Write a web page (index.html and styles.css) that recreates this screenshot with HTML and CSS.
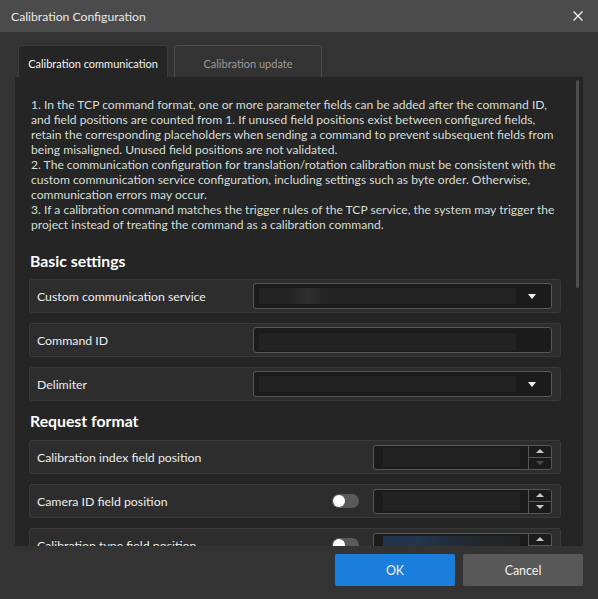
FILE: index.html
```html
<!DOCTYPE html>
<html>
<head>
    <title>Calibration Configuration</title>
    <link rel="stylesheet" href="styles.css">
</head>
<body>
    <div class="dialog">
        <div class="titlebar">
            <span class="title">Calibration Configuration</span>
            <button class="close">
                <svg width="10" height="10" viewBox="0 0 10 10"><path d="M0.5 0.5L9.5 9.5M9.5 0.5L0.5 9.5" stroke="#f0f0f0" stroke-width="1.4" fill="none"/></svg>
            </button>
        </div>

        <div class="main">
            <div class="tabs">
                <div class="tab active">Calibration communication</div>
                <div class="tab">Calibration update</div>
            </div>

            <div class="panel">
                <div class="panel-body">
                    <p class="notice">
                        1. In the TCP command format, one or more parameter fields can be added after the command ID,<br>
                        and field positions are counted from 1. If unused field positions exist between configured fields,<br>
                        retain the corresponding placeholders when sending a command to prevent subsequent fields from<br>
                        being misaligned. Unused field positions are not validated.<br>
                        2. The communication configuration for translation/rotation calibration must be consistent with the<br>
                        custom communication service configuration, including settings such as byte order. Otherwise,<br>
                        communication errors may occur.<br>
                        3. If a calibration command matches the trigger rules of the TCP service, the system may trigger the<br>
                        project instead of treating the command as a calibration command.
                    </p>

                    <h2 class="section first">Basic settings</h2>
                    <div class="rows">
                        <div class="row">
                            <span class="label">Custom communication service</span>
                            <div class="combo">
                                <span class="value glow"></span>
                                <span class="caret"></span>
                            </div>
                        </div>
                        <div class="row">
                            <span class="label">Command ID</span>
                            <div class="combo">
                                <span class="value tall"></span>
                            </div>
                        </div>
                        <div class="row">
                            <span class="label">Delimiter</span>
                            <div class="combo">
                                <span class="value"></span>
                                <span class="caret"></span>
                            </div>
                        </div>
                    </div>

                    <h2 class="section">Request format</h2>
                    <div class="rows">
                        <div class="row">
                            <span class="label">Calibration index field position</span>
                            <div class="spinbox">
                                <span class="spin-value"><span class="value"></span></span>
                                <span class="spin-buttons">
                                    <span class="spin up"></span>
                                    <span class="spin down off"></span>
                                </span>
                            </div>
                        </div>
                        <div class="row">
                            <span class="label">Camera ID field position</span>
                            <span class="toggle"><span class="knob"></span></span>
                            <div class="spinbox">
                                <span class="spin-value"><span class="value"></span></span>
                                <span class="spin-buttons">
                                    <span class="spin up"></span>
                                    <span class="spin down"></span>
                                </span>
                            </div>
                        </div>
                        <div class="row">
                            <span class="label">Calibration type field position</span>
                            <span class="toggle"><span class="knob"></span></span>
                            <div class="spinbox">
                                <span class="spin-value"><span class="value blue"></span></span>
                                <span class="spin-buttons">
                                    <span class="spin up"></span>
                                    <span class="spin down"></span>
                                </span>
                            </div>
                        </div>
                    </div>
                </div>
                <div class="scrollbar"><div class="thumb"></div></div>
            </div>
        </div>

        <div class="footer">
            <button class="btn primary">OK</button>
            <button class="btn">Cancel</button>
        </div>
    </div>
</body>
</html>
```

FILE: styles.css
```css
html, body {
    margin: 0;
    padding: 0;
    background-color: #333333;
    overflow: hidden;
}
body {
    font-family: Lato, "Noto Sans", sans-serif;
    color: #e6e6e6;
}
.dialog {
    width: 598px;
    height: 599px;
    display: flex;
    flex-direction: column;
    background-color: #333333;
}

/* title bar */
.titlebar {
    height: 32px;
    flex: none;
    display: flex;
    align-items: center;
    justify-content: space-between;
    padding: 0 13px 0 11px;
    background-color: #4b4b4b;
}
.title {
    font-size: 12.2px;
    color: #e8e8e8;
}
.close {
    width: 14px;
    height: 14px;
    padding: 0;
    border: none;
    background: none;
    display: flex;
    align-items: center;
    justify-content: center;
}

/* tabs + page */
.main {
    flex: none;
    padding: 13px 15px 0 15px;
}
.tabs {
    height: 32px;
    display: flex;
    gap: 6px;
    padding-left: 3px;
}
.tab {
    box-sizing: border-box;
    width: 148px;
    height: 32px;
    display: flex;
    align-items: center;
    justify-content: center;
    padding-top: 3px;
    font-size: 11px;
    white-space: nowrap;
    color: #9a9a9a;
    border: 1px solid #4c4c4c;
    border-bottom: none;
    border-radius: 3px 3px 0 0;
}
.tab.active {
    width: 150px;
    color: #f2f2f2;
    background-color: #252525;
    border-color: #3c3c3c;
}
.panel {
    height: 469px;
    display: flex;
    overflow: hidden;
    background-color: #252525;
}
.panel-body {
    width: 532px;
    flex: none;
    padding: 20px 15px 0 14px;
}
.scrollbar {
    width: 3px;
    margin: 3px 4px 0 auto;
}
.thumb {
    height: 208px;
    border-radius: 2px;
    background-color: #4e4e4e;
}

.notice {
    margin: 0 0 0 2px;
    font-size: 12.1px;
    line-height: 15px;
    color: #d5ded8;
    white-space: nowrap;
}
.section {
    margin: 10px 0 9px 1px;
    font-size: 15.8px;
    line-height: 20px;
    font-weight: bold;
    color: #ffffff;
}
.section.first {
    margin-top: 19px;
    margin-bottom: 8px;
}

/* setting rows */
.rows {
    display: flex;
    flex-direction: column;
    gap: 10px;
}
.row {
    box-sizing: border-box;
    height: 34px;
    display: flex;
    align-items: center;
    padding: 0 8px 0 7px;
    background-color: #2d2d2d;
    border: 1px solid #3a3a3a;
    border-radius: 3px;
}
.label {
    font-size: 12.3px;
    color: #eeeeee;
    margin-right: auto;
}
.combo {
    box-sizing: border-box;
    width: 299px;
    height: 26px;
    display: flex;
    align-items: center;
    padding: 0 5px;
    background-color: #1b1b1b;
    border: 1px solid #575757;
    border-radius: 3px;
}
.value {
    display: block;
    width: 257px;
    height: 16px;
    background-color: #222222;
}
.value.glow {
    background: linear-gradient(90deg, #232323 0, #242424 12%, #2f2f2f 19%, #242424 26%, #222222 100%);
}
.value.tall {
    height: 18px;
    margin-top: 4px;
}
.value.blue {
    background: linear-gradient(90deg, #22354b 0, #22364d 25%, #232b35 55%, #222222 100%);
}
.caret {
    margin-left: 12px;
    width: 0;
    height: 0;
    border-left: 4px solid transparent;
    border-right: 4px solid transparent;
    border-top: 5px solid #f0f0f0;
}

/* number fields */
.spinbox {
    box-sizing: border-box;
    width: 179px;
    height: 25px;
    display: flex;
    background-color: #1b1b1b;
    border: 1px solid #575757;
    border-radius: 3px;
}
.spin-value {
    flex: 1;
    display: flex;
    align-items: center;
    padding-left: 9px;
}
.spin-value .value {
    width: 137px;
    height: 19px;
}
.spin-buttons {
    width: 22px;
    display: flex;
    flex-direction: column;
    border-left: 1px solid #575757;
}
.spin {
    flex: 1;
    display: flex;
    align-items: center;
    justify-content: center;
}
.spin.up {
    border-bottom: 1px solid #575757;
}
.spin::after {
    content: "";
    width: 0;
    height: 0;
    border-left: 4px solid transparent;
    border-right: 4px solid transparent;
}
.spin.up::after {
    border-bottom: 4px solid #c8c8c8;
}
.spin.down::after {
    border-top: 4px solid #c8c8c8;
}
.spin.down.off::after {
    border-top-color: #4a4a4a;
}

.toggle {
    width: 27px;
    height: 14px;
    margin-right: 14px;
    display: flex;
    align-items: center;
    padding-left: 1px;
    box-sizing: border-box;
    border-radius: 7px;
    background-color: #5a5a5a;
}
.knob {
    width: 12px;
    height: 12px;
    border-radius: 50%;
    background-color: #ffffff;
}

/* footer buttons */
.footer {
    flex: 1;
    display: flex;
    justify-content: flex-end;
    gap: 8px;
    padding: 8px 15px 0 0;
}
.btn {
    width: 120px;
    height: 32px;
    border: none;
    border-radius: 2px;
    font-family: inherit;
    font-size: 12.4px;
    color: #f0f0f0;
    background-color: #585858;
}
.btn.primary {
    background-color: #1a7fdc;
}
```
